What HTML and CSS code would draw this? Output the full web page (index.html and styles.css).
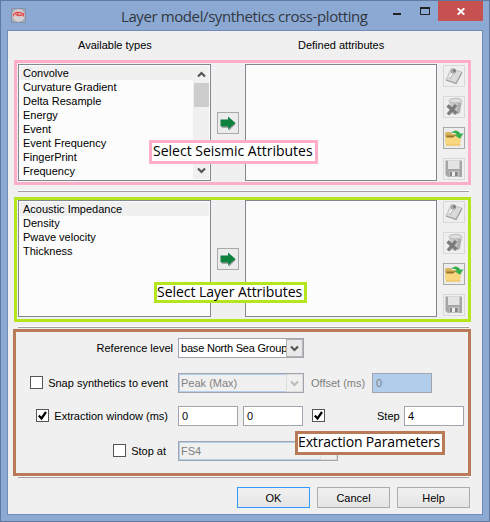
FILE: index.html
```
<!DOCTYPE html>
<html lang="en">
<head>
<meta charset="utf-8">
<title>Layer model/synthetics cross-plotting</title>
<link rel="stylesheet" href="styles.css">
</head>
<body>
<svg class="defs" width="0" height="0" aria-hidden="true">
  <symbol id="arrow" viewBox="0 0 20 20"><path d="M3 7h7V4l7 6-7 7v-3H3z" fill="#555" opacity=".45" transform="translate(.9 1)"/><path d="M2.500 6.500H10V3.500l7.500 6.500-7.500 6.500V13.500H2.500z" fill="#0e8040"/></symbol>
  <symbol id="edit" viewBox="0 0 20 20"><path d="M7 3l11 3-6 11-10-3z" fill="#dadada" stroke="#c4c4c4"/><path d="M2 14l10 3.500 6-11" fill="none" stroke="#a0a0a0" stroke-width="1.300"/><path d="M6 11l4-6" stroke="#f8f8f8" stroke-width="2"/><circle cx="9.500" cy="5" r="2.700" fill="#a5a5a5"/><path d="M9 8l-3 5" stroke="#b0b0b0"/><circle cx="10.500" cy="4.800" r="1.200" fill="#777"/></symbol>
  <symbol id="trash" viewBox="0 0 20 20"><path d="M5 4l2 13q5 2 9-1l2-12z" fill="#c8c8c8"/><path d="M14 6h3.500l-2 10-3 1z" fill="#b0b0b0"/><ellipse cx="11.500" cy="3.700" rx="6.500" ry="2.300" fill="#dedede" stroke="#bcbcbc"/><path d="M3.500 8.500l9 8M12 8l-8 9.500" stroke="#7b7b7b" stroke-width="3.400"/></symbol>
  <symbol id="open" viewBox="0 0 20 20"><path d="M1 6l1-2h5l1 2h8v11H2z" fill="#d8b35c"/><path d="M2.500 7.500h12v2.500h-12z" fill="#94722f"/><path d="M1 9.500h8l2-1.500h6.500L16 17.500H2z" fill="#f8d780"/><path d="M2 17h14.500" stroke="#e8bf5e"/><path d="M7.500 4.500q5-4.500 9 1.200l3-.500-3.500 5.500-5.500-3.500 2.500-.500q-1.500-2.500-5.500-1.700z" fill="#35ae4b"/></symbol>
  <symbol id="save" viewBox="0 0 20 20"><path d="M1.500 1.500h16.500v16.500H4l-2.500-2z" fill="#a6a6a6"/><path d="M4 1.500h11.500v8.500H4z" fill="#e4e4e4"/><path d="M5 12h10.500v6H5z" fill="#bdbdbd"/><path d="M6 13h2v4H6zM11 13h2.500v4H11z" fill="#808080"/><path d="M8 13h3v4H8z" fill="#eee"/></symbol>
  <symbol id="chevron" viewBox="0 0 9 7"><path d="M1 1.500l3.500 3.500L8 1.500" fill="none" stroke="currentColor" stroke-width="2.200"/></symbol>
  <symbol id="check" viewBox="0 0 11 11"><path d="M1.800 5.500l2.700 3L9 2" fill="none" stroke="#000" stroke-width="2.200"/></symbol>
</svg>

<div class="window">
  <header class="titlebar">
    <svg class="app-icon" viewBox="0 0 15 15"><rect x=".5" y=".5" width="14" height="14" fill="#a4abba" stroke="#8592ab"/><circle cx="7.500" cy="7.500" r="6.200" fill="#d6d0d0"/><path d="M2.500 8.500V6.500L5 4.500h4L12.500 6v2.500M4.500 6.500l3 1 4-.5M6.500 5v3" fill="none" stroke="#e54848" stroke-width="1.300"/></svg>
    <h1 class="title">Layer model/synthetics cross-plotting</h1>
    <div class="controls">
      <span class="minimize"></span><span class="maximize"></span>
      <span class="close"><svg viewBox="0 0 8 7"><path d="M.7.300l6.600 6.400M7.300.300L.7 6.700" stroke="#fff" stroke-width="1.900"/></svg></span>
    </div>
  </header>

  <main class="client">
    <div class="headings"><span class="available">Available types</span><span class="defined">Defined attributes</span></div>

    <section class="group seismic">
      <div class="list">
        <ul><li class="current">Convolve</li><li>Curvature Gradient</li><li>Delta Resample</li><li>Energy</li><li>Event</li><li>Event Frequency</li><li>FingerPrint</li><li>Frequency</li></ul>
        <div class="scrollbar"><svg class="up"><use href="#chevron"/></svg><span class="thumb"></span><svg class="down"><use href="#chevron"/></svg></div>
      </div>
      <div class="move"><button class="tool"><svg><use href="#arrow"/></svg></button></div>
      <div class="list"></div>
      <div class="tools">
        <button class="tool off"><svg><use href="#edit"/></svg></button>
        <button class="tool off"><svg><use href="#trash"/></svg></button>
        <button class="tool"><svg><use href="#open"/></svg></button>
        <button class="tool off"><svg><use href="#save"/></svg></button>
      </div>
      <div class="note"><span>Select Seismic Attributes</span></div>
    </section>

    <div class="rule"></div>

    <section class="group layer">
      <div class="list">
        <ul><li class="current">Acoustic Impedance</li><li>Density</li><li>Pwave velocity</li><li>Thickness</li></ul>
      </div>
      <div class="move"><button class="tool"><svg><use href="#arrow"/></svg></button></div>
      <div class="list"></div>
      <div class="tools">
        <button class="tool off"><svg><use href="#edit"/></svg></button>
        <button class="tool off"><svg><use href="#trash"/></svg></button>
        <button class="tool"><svg><use href="#open"/></svg></button>
        <button class="tool off"><svg><use href="#save"/></svg></button>
      </div>
      <div class="note"><span>Select Layer Attributes</span></div>
    </section>

    <div class="rule second"></div>

    <section class="params">
      <div class="row">
        <div class="label wide"><span>Reference level</span></div>
        <div class="select"><span class="value level">base North Sea Group</span><span class="drop"><svg><use href="#chevron"/></svg></span></div>
      </div>
      <div class="row">
        <div class="label"><span class="check"></span><span>Snap synthetics to event</span></div>
        <div class="select disabled"><span class="value">Peak (Max)</span><span class="drop"><svg><use href="#chevron"/></svg></span></div>
        <span class="offset">Offset (ms)</span>
        <div class="input disabled">0</div>
      </div>
      <div class="row">
        <div class="label"><span class="check"><svg><use href="#check"/></svg></span><span>Extraction window (ms)</span></div>
        <div class="input">0</div>
        <div class="input next">0</div>
        <span class="check lone"><svg><use href="#check"/></svg></span>
        <span class="step">Step</span>
        <div class="input">4</div>
      </div>
      <div class="row">
        <div class="label stop"><span class="check"></span><span>Stop at</span></div>
        <div class="select disabled long"><span class="value">FS4</span><span class="drop"><svg><use href="#chevron"/></svg></span></div>
      </div>
      <div class="note"><span>Extraction Parameters</span></div>
    </section>

    <div class="rule last"></div>
    <footer class="actions"><button class="btn default">OK</button><button class="btn">Cancel</button><button class="btn">Help</button></footer>
  </main>
</div>
</body>
</html>
```
FILE: styles.css
```
* { box-sizing: border-box; }
body { margin: 0; font: 11px/14px "Liberation Sans", Arial, sans-serif; color: #000; }
svg { display: block; }
.defs { position: absolute; }
button { font: inherit; padding: 0; margin: 0; }
.window { width: 490px; height: 522px; border: 1px solid #60799f; background: #8ca9d4; padding: 0 6px 6px; display: flex; flex-direction: column; }
.titlebar { height: 29px; flex: none; display: flex; align-items: flex-start; }
.app-icon { width: 15px; height: 15px; margin: 7px 0 0 4px; }
.title { margin: 5px 0 0 95px; width: 250px; font: 15px/21px "Open Sans", sans-serif; letter-spacing: -.4px; color: #32373f; white-space: nowrap; }
.controls { display: flex; margin-left: 22px; }
.minimize { width: 8px; height: 2px; background: #222; margin-top: 12px; }
.maximize { width: 10px; height: 8px; border: 1px solid #222; border-top-width: 2px; margin: 6px 0 0 19px; }
.close { width: 45px; height: 20px; margin-left: 8px; background: #c75050; display: flex; align-items: center; justify-content: center; }
.close svg { width: 8px; height: 7px; }

.client { flex: none; width: 476px; height: 485px; border: 1px solid #6f8cb8; background: #f0f0f0; padding: 0 0 0 6px; }
.headings { height: 29px; padding: 7px 0 0 64px; display: flex; white-space: nowrap; }
.available { width: 220px; }

.group { position: relative; width: 457px; height: 125px; border: 3px solid #ffaec9; padding: 1px; display: grid; grid-template-columns: 193px 34px 192px 28px; }
.layer { border-color: #b5e61d; padding-top: 0; }
.list { height: 117px; border: 1px solid #828790; background: #fcfcfc; padding: 1px; display: flex; }
.list ul { flex: 1; list-style: none; margin: 0; padding: 0; }
.list li { height: 14px; padding-left: 3px; white-space: nowrap; }
.list li.current { background: #f0f0f0; }
.scrollbar { width: 16px; background: #f0f0f0; display: flex; flex-direction: column; align-items: center; color: #555; }
.scrollbar svg { width: 9px; height: 7px; flex: none; }
.up { margin: 5px 0; transform: rotate(180deg); }
.thumb { width: 15px; height: 24px; background: #cdcdcd; }
.down { margin: auto 0 5px; }
.move { padding: 48px 0 0 6px; }
.tool { width: 22px; height: 22px; border: 1px solid #a9a9a9; background: #ececec; display: block; }
.tool.off { border-color: #d9d9d9; background: #efefef; }
.tool svg { width: 20px; height: 20px; }
.tools { padding: 1px 0 0 6px; display: flex; flex-direction: column; gap: 9px; }
.note { position: absolute; border: 3px solid #ffaec9; background: #fff; color: #000; font: 14px/16px "Open Sans", sans-serif; white-space: nowrap; }
.seismic .note { left: 132px; top: 77px; width: 169px; height: 24px; padding-left: 1px; }
.layer .note { left: 137px; top: 82px; width: 153px; height: 21px; line-height: 14px; letter-spacing: -.05px; border-color: #b5e61d; }

.rule { width: 451px; height: 2px; margin: 5px 0 5px 4px; border-top: 1px solid #fff; border-bottom: 1px solid #a0a0a0; }
.rule.second { margin: 4px 0 1px 4px; }
.rule.last { margin: 0 0 0 4px; }

.params { position: relative; margin-left: -1px; width: 458px; height: 147px; border: 3px solid #b97a57; padding-top: 6px; }
.row { display: flex; align-items: center; height: 20px; margin-bottom: 15px; white-space: nowrap; }
.row:nth-child(2) { margin-bottom: 13px; }
.label { width: 162px; display: flex; justify-content: flex-end; align-items: center; padding-right: 10px; gap: 5px; }
.label.wide { padding-right: 5px; }
.label.stop { padding-right: 12px; }
.check { width: 13px; height: 13px; flex: none; border: 1px solid #555; background: #fff; margin-bottom: 1px; }
.check svg { width: 11px; height: 11px; }
.select { width: 126px; height: 20px; border: 1px solid #a3a5ae; background: #fff; display: flex; }
.select.long { width: 160px; }
.value { flex: 1; min-width: 0; overflow: hidden; line-height: 18px; padding-left: 2px; }
.level { letter-spacing: -.2px; }
.drop { width: 17px; border: 1px solid #b3b3b3; background: #e9e9e9; display: flex; align-items: center; justify-content: center; color: #555; }
.drop svg { width: 9px; height: 7px; }
.select.disabled { background: #f0f0f0; color: #808080; }
.select.disabled .value { border: 1px solid #b2cfee; border-right: 0; line-height: 16px; padding-left: 1px; }
.select.disabled .drop { color: #bbb; border-color: #ddd; background: #f0f0f0; }
.input { width: 60px; height: 20px; border: 1px solid #a3a5ae; background: #fff; padding-left: 3px; line-height: 18px; }
.input.disabled { background: #b1cdec; color: #808080; }
.next { margin-left: 5px; }
.lone { margin-left: 9px; }
.offset { width: 68px; padding-left: 7px; color: #808080; }
.step { width: 79px; padding-left: 52px; }
.params .note { left: 279px; top: 99px; width: 150px; height: 24px; letter-spacing: -.15px; border-color: #b97a57; }

.actions { display: flex; gap: 7px; padding: 9px 0 0 223px; }
.btn { width: 73px; height: 21px; border: 1px solid #acacac; background: linear-gradient(#f0f0f0, #e5e5e5); }
.btn.default { border: 1px solid #3399ff; }
```
